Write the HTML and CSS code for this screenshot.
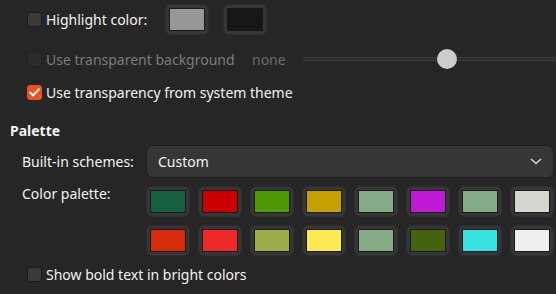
FILE: index.html
```html
<!DOCTYPE html>
<html lang="en">
<head>
    <meta charset="UTF-8">
    <meta name="viewport" content="width=device-width, initial-scale=1.0">
    <title>Terminal Preferences</title>
    <link rel="stylesheet" href="styles.css">
</head>
<body>
    <div class="prefs">
        <div class="row row-highlight">
            <span class="check"></span>
            <span class="label label-highlight">Highlight color:</span>
            <span class="color-btn"><span class="swatch" style="background: #979797"></span></span>
            <span class="color-btn"><span class="swatch" style="background: #171717"></span></span>
        </div>

        <div class="row row-transparent disabled">
            <span class="check"></span>
            <span class="label label-transparent">Use transparent background</span>
            <span class="label none">none</span>
            <div class="slider">
                <div class="track"></div>
                <div class="knob"></div>
            </div>
        </div>

        <div class="row row-system">
            <span class="check checked">
                <svg width="11" height="9" viewBox="0 0 11 9"><path d="M1.2 4.6 L4.2 7.4 L9.8 1.4" fill="none" stroke="#fff" stroke-width="2" stroke-linecap="round" stroke-linejoin="round"/></svg>
            </span>
            <span class="label">Use transparency from system theme</span>
        </div>

        <h3 class="section">Palette</h3>

        <div class="field">
            <span class="field-label">Built-in schemes:</span>
            <div class="combo">
                <span>Custom</span>
                <svg width="12" height="7" viewBox="0 0 12 7"><path d="M1 1 L6 5.5 L11 1" fill="none" stroke="#d6d6d6" stroke-width="1.4"/></svg>
            </div>
        </div>

        <div class="field field-palette">
            <span class="field-label">Color palette:</span>
            <div class="palette">
                <span class="color-btn"><span class="swatch" style="background: #17603f"></span></span>
                <span class="color-btn"><span class="swatch" style="background: #cc0000"></span></span>
                <span class="color-btn"><span class="swatch" style="background: #4e9a06"></span></span>
                <span class="color-btn"><span class="swatch" style="background: #c4a000"></span></span>
                <span class="color-btn"><span class="swatch" style="background: #87aa86"></span></span>
                <span class="color-btn"><span class="swatch" style="background: #bf1ad6"></span></span>
                <span class="color-btn"><span class="swatch" style="background: #87aa86"></span></span>
                <span class="color-btn"><span class="swatch" style="background: #d3d7cf"></span></span>
                <span class="color-btn"><span class="swatch" style="background: #d62c0b"></span></span>
                <span class="color-btn"><span class="swatch" style="background: #ef2929"></span></span>
                <span class="color-btn"><span class="swatch" style="background: #9bad4a"></span></span>
                <span class="color-btn"><span class="swatch" style="background: #fce94f"></span></span>
                <span class="color-btn"><span class="swatch" style="background: #87aa86"></span></span>
                <span class="color-btn"><span class="swatch" style="background: #44630e"></span></span>
                <span class="color-btn"><span class="swatch" style="background: #34e2e2"></span></span>
                <span class="color-btn"><span class="swatch" style="background: #eeeeec"></span></span>
            </div>
        </div>

        <div class="row row-bold">
            <span class="check"></span>
            <span class="label">Show bold text in bright colors</span>
        </div>
    </div>
</body>
</html>
```

FILE: styles.css
```css
body {
    margin: 0;
    background: #262626;
    color: #f2f2f2;
    font-family: 'Noto Sans', 'Open Sans', sans-serif;
    font-size: 14px;
    overflow: hidden;
}
.prefs {
    display: flex;
    flex-direction: column;
    padding: 0 2px 0 10px;
}
.row {
    display: flex;
    align-items: center;
    padding-left: 17px;
}
.row-highlight {
    height: 39px;
}
.row-transparent {
    height: 40px;
    margin-right: -2px;
}
.row-system {
    height: 27px;
}
.row-bold {
    height: 22px;
    margin-top: 7px;
}
.check {
    box-sizing: border-box;
    width: 15px;
    height: 15px;
    flex: none;
    display: flex;
    align-items: center;
    justify-content: center;
    background: #3a3a3a;
    border: 1px solid #1c1c1c;
    border-radius: 3px;
    margin-right: 4px;
}
.check.checked {
    background: #e95420;
    border-color: #e95420;
}
.disabled .check {
    background: #2c2c2c;
    border-color: #202020;
}
.disabled .label {
    color: #7c7c7c;
}
.label {
    white-space: nowrap;
}
.label-highlight {
    width: 119px;
    flex: none;
}
.label-transparent {
    width: 206px;
    flex: none;
}
.none {
    width: 51px;
    flex: none;
    color: #6a6a6a !important;
}
.slider {
    position: relative;
    flex: 1;
    height: 20px;
    display: flex;
    align-items: center;
}
.track {
    box-sizing: border-box;
    width: 100%;
    height: 4px;
    background: #2c2c2c;
    border: 1px solid #3e3e3e;
    border-radius: 2px;
}
.knob {
    position: absolute;
    left: 134px;
    top: 0;
    width: 20px;
    height: 20px;
    border-radius: 50%;
    background: #cccccc;
}
.color-btn {
    box-sizing: border-box;
    width: 44px;
    height: 31px;
    padding: 4px;
    background: #363636;
    border: 1px solid #2e2e2e;
    border-radius: 6px;
    display: flex;
}
.color-btn .swatch {
    flex: 1;
    margin: -1px;
    border: 1px solid #1a1a1a;
}
.row-highlight .color-btn + .color-btn {
    margin-left: 14px;
}
.section {
    margin: 0;
    height: 38px;
    padding-top: 16px;
    box-sizing: border-box;
    font-size: 14px;
    font-weight: bold;
    line-height: 18px;
}
.field {
    display: flex;
    align-items: center;
    padding-left: 12px;
    margin-top: 1px;
}
.field-label {
    width: 124px;
    flex: none;
}
.combo {
    box-sizing: border-box;
    flex: 1;
    height: 33px;
    display: flex;
    align-items: center;
    justify-content: space-between;
    padding: 0 11px 0 11px;
    background: #363636;
    border: 1px solid #1f1f1f;
    border-radius: 7px;
}
.field-palette {
    align-items: flex-start;
    margin-top: 8px;
}
.field-palette .field-label {
    line-height: 16px;
}
.palette {
    display: grid;
    grid-template-columns: repeat(8, 44px);
    gap: 8px;
}
```
